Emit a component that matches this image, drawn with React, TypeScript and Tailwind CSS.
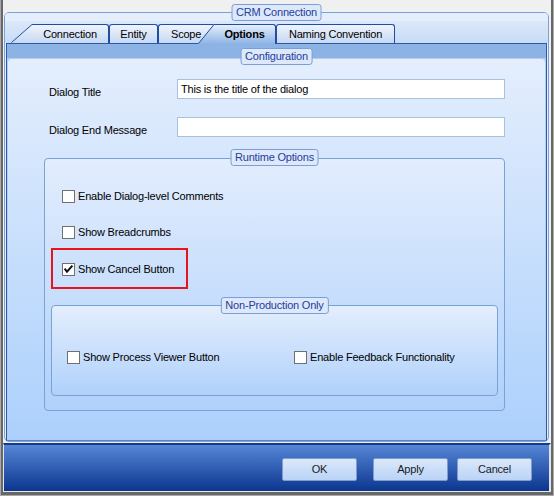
import React from "react";

function Legend({ text, pos }: { text: string; pos: string }) {
  return (
    <div
      className={`absolute left-1/2 -translate-x-1/2 z-20 h-[17px] px-[4px] rounded-[3px] border border-[#7a9fd6] bg-[#dde9fb] text-[11px] leading-[15px] text-[#24409a] whitespace-nowrap ${pos}`}
    >
      {text}
    </div>
  );
}

function Check({ checked }: { checked?: boolean }) {
  return (
    <div className="w-[13px] h-[13px] border border-[#707070] bg-white shrink-0">
      {checked && (
        <svg width="11" height="11" viewBox="0 0 11 11" className="block">
          <path d="M1.6 4.6 L4 7.6 L9.4 1.6" fill="none" stroke="#111" strokeWidth="2" />
        </svg>
      )}
    </div>
  );
}

function CheckRow({ label, checked, cls }: { label: string; checked?: boolean; cls?: string }) {
  return (
    <div className={`flex items-center h-[13px] ${cls ?? ""}`}>
      <Check checked={checked} />
      <span className="ml-[3px] whitespace-nowrap">{label}</span>
    </div>
  );
}

function Slant({ w, fillTop, fillBottom, id, tall }: { w: number; fillTop: string; fillBottom: string; id: string; tall?: boolean }) {
  const h = tall ? 20 : 19;
  return (
    <svg width={w} height={h} viewBox={`0 0 ${w} ${h}`} className={`block shrink-0 ${tall ? "relative z-10 -mb-px" : ""}`}>
      <defs>
        <linearGradient id={id} x1="0" y1="0" x2="0" y2="1">
          <stop offset="0" stopColor={fillTop} />
          <stop offset="1" stopColor={fillBottom} />
        </linearGradient>
      </defs>
      <polygon points={`0,${h} ${w},0 ${w},${h}`} fill={`url(#${id})`} />
      <line x1="0.5" y1={h - 0.5} x2={w} y2="0.5" stroke="#1f4d9f" strokeWidth="1" />
    </svg>
  );
}

const tabBg = "bg-[linear-gradient(to_bottom,#eef4fd,#c7d9f3)]";

export default function App() {
  return (
    <div className="w-[554px] h-[496px] border-x border-b border-[#a9a9a9] font-['Liberation_Sans',Arial,sans-serif] text-[11px] tracking-[-0.2px] text-black">
      <div className="h-full border-x-2 border-b-[3px] border-[#686868] bg-[#f0f0f0] flex flex-col">
        {/* top area */}
        <div className="h-[443px] pt-[12px] pl-[1px] pr-[2px]">
          <div className="relative h-[430px] rounded-[5px] border border-[#7ba2d8] bg-[#e4eefc] flex flex-col">
            <Legend text="CRM Connection" pos="top-[-9px]" />
            {/* tab strip */}
            <div className="h-[30px] shrink-0 flex items-end pl-[6px] bg-[linear-gradient(to_bottom,#e4eefc_0px,#e4eefc_8px,#dce8fa_8px,#c8dbf5_100%)] rounded-t-[4px]">
              <Slant w={21} fillTop="#eef4fd" fillBottom="#c7d9f3" id="g1" />
              <div className={`w-[77px] h-[19px] border-t border-r border-[#1f4d9f] rounded-tr-[3px] ${tabBg} flex items-center justify-center`}>
                Connection
              </div>
              <div className={`w-[49px] h-[19px] border-t border-x border-[#1f4d9f] rounded-t-[3px] ${tabBg} flex items-center justify-center`}>
                Entity
              </div>
              <div className={`w-[56px] h-[19px] border-t border-l border-[#1f4d9f] rounded-tl-[3px] ${tabBg} flex items-center pl-[12px]`}>
                Scope
              </div>
              <div className="-ml-[16px] flex items-end relative z-10">
                <Slant w={16} fillTop="#e6effc" fillBottom="#8db3e5" id="g2" tall />
              </div>
              <div className="relative z-10 -mb-px w-[62px] h-[20px] border-t border-r border-[#1f4d9f] rounded-tr-[3px] bg-[linear-gradient(to_bottom,#e6effc,#8db3e5)] flex items-center justify-center font-bold pb-px">
                Options
              </div>
              <div className={`w-[119px] h-[19px] border-t border-x border-[#1f4d9f] rounded-t-[3px] ${tabBg} flex items-center justify-center`}>
                Naming Convention
              </div>
            </div>
            {/* tab page */}
            <div className="relative flex-1 mx-px border border-[#2a59a8] border-b-[#5a85c8] bg-[#aecffb] flex flex-col">
              <Legend text="Configuration" pos="top-[4px]" />
              <div className="h-[14px] shrink-0 bg-[#8db3e5]" />
              <div className="flex-1 rounded-[4px] border border-[#b4cced] bg-[linear-gradient(to_bottom,#e4eefd,#acd0fc)] bg-clip-padding">
                <div className="ml-[36px] w-[461px] pt-[20px]">
                  <div className="flex">
                    <div className="w-[133px] pl-[5px] pt-[7px] leading-[13px]">Dialog Title</div>
                    <div className="w-[328px] h-[20px] border border-[#a9c0df] bg-white pl-[3px] leading-[18px]">
                      This is the title of the dialog
                    </div>
                  </div>
                  <div className="flex mt-[18px]">
                    <div className="w-[133px] pl-[5px] pt-[7px] leading-[13px]">Dialog End Message</div>
                    <div className="w-[328px] h-[20px] border border-[#a9c0df] bg-white" />
                  </div>
                  {/* runtime options */}
                  <div className="relative mt-[21px] h-[253px] rounded-[4px] border border-[#7ba2d8] bg-[linear-gradient(to_bottom,#e2edfd,#b0d1fb)]">
                    <Legend text="Runtime Options" pos="top-[-10px]" />
                    <div className="pl-[17px] pt-[31px]">
                      <CheckRow label="Enable Dialog-level Comments" />
                      <CheckRow label="Show Breadcrumbs" cls="mt-[23px]" />
                      <CheckRow label="Show Cancel Button" checked cls="mt-[24px]" />
                    </div>
                    <div className="absolute left-[6px] top-[89px] w-[137px] h-[41px] border-2 border-[#e8141b]" />
                    <div className="relative mt-[29px] mx-[6px] h-[91px] rounded-[4px] border border-[#7ba2d8] bg-[linear-gradient(to_bottom,#e4eefd,#b0d1fb)]">
                      <Legend text="Non-Production Only" pos="top-[-9px]" />
                      <div className="flex pt-[45px] pl-[15px]">
                        <div className="w-[227px]">
                          <CheckRow label="Show Process Viewer Button" />
                        </div>
                        <CheckRow label="Enable Feedback Functionality" />
                      </div>
                    </div>
                  </div>
                </div>
              </div>
            </div>
          </div>
        </div>
        {/* bottom bar */}
        <div className="h-[49px] border-t-2 border-t-[#163a85] border-b border-b-[#e8e8e8] border-l border-l-[#e4e8ee] border-r-2 border-r-[#dfe3ea] bg-[linear-gradient(to_bottom,#5686d6,#0b368f)] flex justify-end pr-[17px] pt-[13px]">
          {["OK", "Apply", "Cancel"].map((t, i) => (
            <div
              key={t}
              className={`w-[75px] h-[23px] rounded-[2px] border border-[#7e9dcc] bg-[linear-gradient(to_bottom,#dbe8fb,#bad3f6)] flex items-center justify-center text-[#1a1a1a] ${i === 0 ? "mr-[16px]" : i === 1 ? "mr-[9px]" : ""}`}
            >
              {t}
            </div>
          ))}
        </div>
      </div>
    </div>
  );
}
